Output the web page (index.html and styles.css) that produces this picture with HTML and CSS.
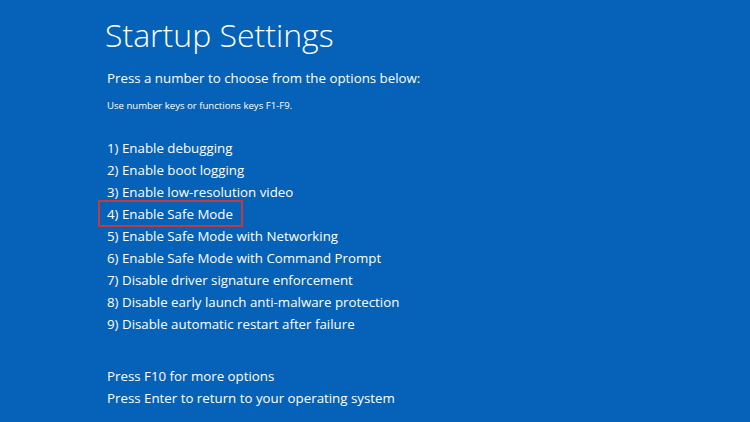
FILE: index.html
```html
<!DOCTYPE html>
<html lang="en">
<head>
    <meta charset="UTF-8">
    <meta name="viewport" content="width=device-width, initial-scale=1.0">
    <title>Startup Settings</title>
    <link rel="stylesheet" href="styles.css">
</head>
<body>
    <div class="screen">
        <h1>Startup Settings</h1>
        <p class="prompt">Press a number to choose from the options below:</p>
        <p class="hint">Use number keys or functions keys F1-F9.</p>

        <ol class="options">
            <li>1) Enable debugging</li>
            <li>2) Enable boot logging</li>
            <li>3) Enable low-resolution video</li>
            <li><span class="marked">4) Enable Safe Mode</span></li>
            <li>5) Enable Safe Mode with Networking</li>
            <li>6) Enable Safe Mode with Command Prompt</li>
            <li>7) Disable driver signature enforcement</li>
            <li>8) Disable early launch anti-malware protection</li>
            <li>9) Disable automatic restart after failure</li>
        </ol>

        <div class="footer">
            <p>Press F10 for more options</p>
            <p>Press Enter to return to your operating system</p>
        </div>
    </div>
</body>
</html>
```

FILE: styles.css
```css
html, body {
    margin: 0;
    height: 100%;
}
body {
    background-color: #0562b8;
    color: #fff;
    font-family: "Open Sans", "Noto Sans", sans-serif;
    overflow: hidden;
}
.screen {
    padding: 12px 0 0 105px;
}
h1 {
    margin: 0;
    font-size: 32px;
    font-weight: 300;
    line-height: 46px;
}
.prompt {
    margin: 10px 0 0 2px;
    font-size: 13.3px;
    line-height: 20px;
}
.hint {
    margin: 11px 0 0 2px;
    font-size: 9.6px;
    line-height: 14px;
}
.options {
    list-style: none;
    margin: 24px 0 0 2px;
    padding: 0;
    font-size: 13.3px;
    line-height: 22px;
}
.options li {
    height: 22px;
}
/* red frame around the highlighted choice */
.marked {
    display: inline-block;
    margin: -3px 0 0 -9px;
    padding: 1px 8px 0 7px;
    border: 2px solid #c03b3e;
}
.footer {
    margin: 30px 0 0 2px;
    font-size: 13.3px;
    line-height: 22px;
}
.footer p {
    margin: 0;
}
```
